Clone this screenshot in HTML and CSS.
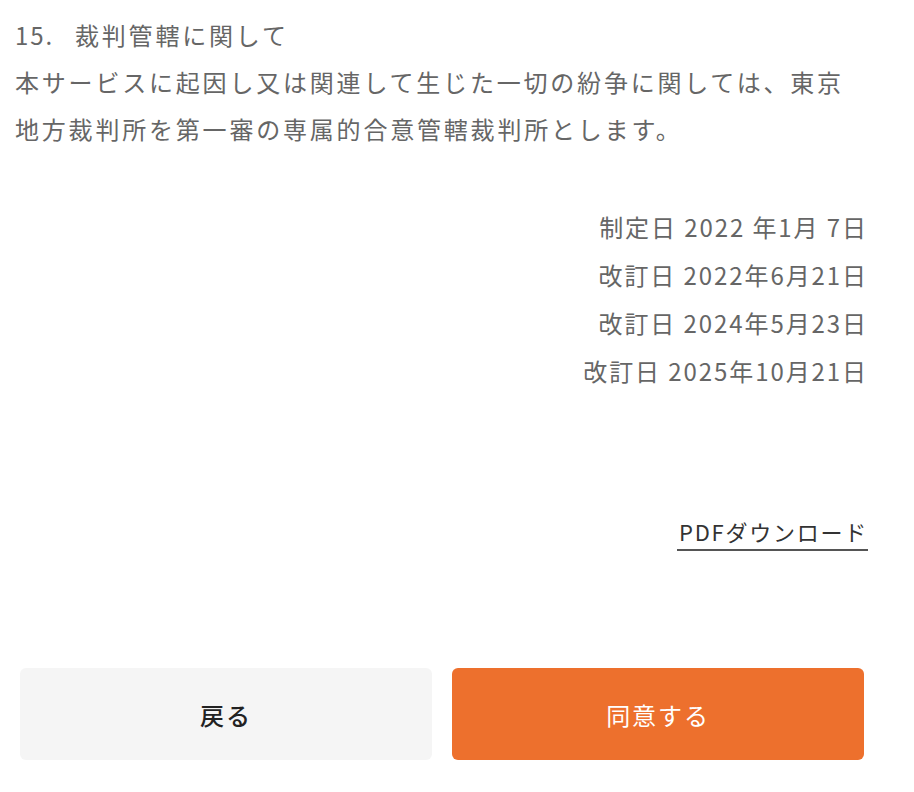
FILE: index.html
```html
<!DOCTYPE html>
<html lang="ja">
<head>
<meta charset="utf-8">
<link rel="stylesheet" href="styles.css">
</head>
<body>
<main class="page">
  <section class="terms">
    <p class="para"><span class="num">15.</span>裁判管轄に関して</p>
    <p class="para">本サービスに起因し又は関連して生じた一切の紛争に関しては、東京地方裁判所を第一審の専属的合意管轄裁判所とします。</p>
    <div class="dates">
      <p>制定日 2022 年1月 7日</p>
      <p>改訂日 2022年6月21日</p>
      <p>改訂日 2024年5月23日</p>
      <p>改訂日 2025年10月21日</p>
    </div>
    <div class="pdf-row">
      <a class="pdf" href="#">PDFダウンロード</a>
    </div>
  </section>
  <div class="actions">
    <button class="btn btn-back" type="button">戻る</button>
    <button class="btn btn-agree" type="button">同意する</button>
  </div>
</main>
</body>
</html>
```

FILE: styles.css
```css
html, body {
  margin: 0;
  padding: 0;
  background: #fff;
}
body {
  font-family: "Noto Sans CJK JP", "Noto Sans", sans-serif;
  color: #666;
}
.terms {
  padding: 11px 46px 0 15px;
}
.para {
  margin: 0;
  padding-right: 4px;
  font-size: 24px;
  line-height: 47px;
  letter-spacing: 2.8px;
}
.num {
  display: inline-block;
  width: 60px;
  letter-spacing: 0.08em;
}
.dates {
  margin-top: 51px;
  text-align: right;
  font-size: 24px;
  line-height: 48px;
  letter-spacing: 0.08em;
}
.dates p {
  margin: 0;
}
.pdf-row {
  display: flex;
  justify-content: flex-end;
  margin-top: 120px;
}
.pdf {
  font-size: 22px;
  line-height: 33px;
  letter-spacing: 0.08em;
  color: #333;
  text-decoration: none;
  border-bottom: 2px solid #555;
  padding: 0 0 1px 2px;
}
.actions {
  display: grid;
  grid-template-columns: 1fr 1fr;
  gap: 20px;
  padding: 0 50px 0 20px;
  margin-top: 117px;
}
.btn {
  height: 92px;
  border: none;
  border-radius: 6px;
  font-family: "Noto Sans CJK JP", sans-serif;
  font-size: 24px;
  letter-spacing: 0.08em;
}
.btn-back {
  background: #f5f5f5;
  color: #222;
  font-weight: 500;
}
.btn-agree {
  background: #ed702d;
  color: #fff;
  font-weight: 400;
}
```
